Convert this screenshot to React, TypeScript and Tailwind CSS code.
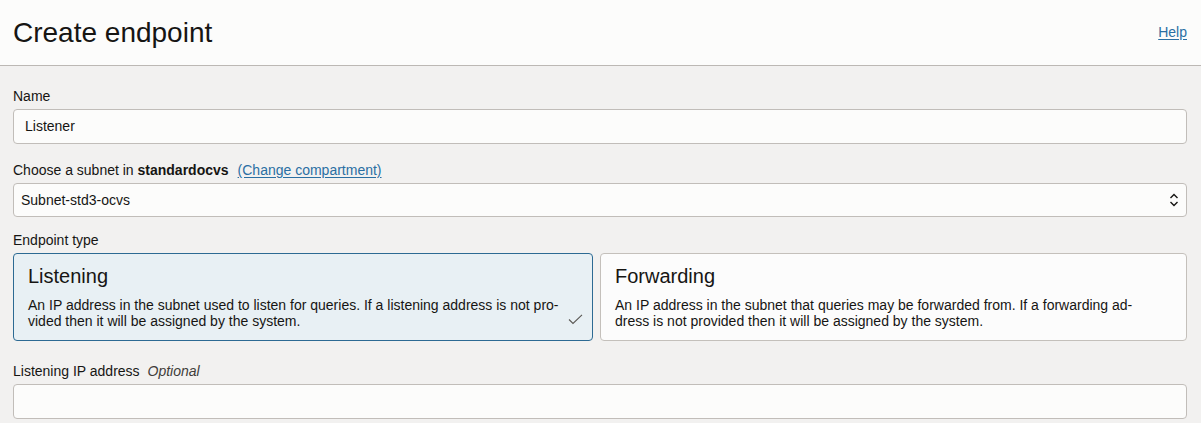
import React from "react";

const font = { fontFamily: "'Liberation Sans', Arial, sans-serif" };

function Label({ children, className = "" }: { children: React.ReactNode; className?: string }) {
  return (
    <div className={`text-[14px] leading-[17px] text-[#161513] ${className}`}>
      {children}
    </div>
  );
}

function TypeCard({
  title,
  lines,
  selected,
  className = "",
}: {
  title: string;
  lines: string[];
  selected?: boolean;
  className?: string;
}) {
  return (
    <div
      className={`relative rounded-[4px] border px-[14px] pt-[10px] pb-[11px] ${
        selected ? "border-[#2d6a93] bg-[#e8f0f4]" : "border-[#c4c0bb] bg-[#fcfcfc]"
      } ${className}`}
    >
      <div className="text-[20px] leading-[24px] text-[#161513]">{title}</div>
      <div className="mt-[9px] text-[14px] leading-[16px] text-[#161513]">
        {lines.map((l) => (
          <div key={l} className="whitespace-nowrap">
            {l}
          </div>
        ))}
      </div>
      {selected && (
        <svg
          className="absolute right-[9px] bottom-[15px]"
          width="15"
          height="11"
          viewBox="0 0 15 11"
          fill="none"
        >
          <path d="M1 5.5 L5 9.5 L14 0.8" stroke="#5a5854" strokeWidth="1.1" />
        </svg>
      )}
    </div>
  );
}

export default function App() {
  return (
    <div className="w-[1201px] h-[423px] overflow-hidden bg-[#f2f1f0]" style={font}>
      {/* Header */}
      <div className="flex h-[66px] items-center justify-between border-b border-[#bcb8b4] bg-[#fcfcfb] pl-[13px] pr-[14px]">
        <h1 className="text-[28px] leading-[32px] text-[#161513]">Create endpoint</h1>
        <a href="#" className="text-[14px] leading-[17px] text-[#2a6fa3] underline underline-offset-2">
          Help
        </a>
      </div>

      <div className="pl-[13px] pr-[14px] pt-[22px]">
        <Label className="mb-[4px]">Name</Label>
        <div className="flex h-[35px] items-center rounded-[4px] border border-[#c1bdb9] bg-[#fcfcfb] px-[11px] text-[14px] text-[#161513]">
          Listener
        </div>

        <Label className="mt-[18px] mb-[4px]">
          Choose a subnet in <span className="font-bold">standardocvs</span>
          <a href="#" className="ml-[9px] text-[#2a6fa3] underline underline-offset-2">
            (Change compartment)
          </a>
        </Label>
        <div className="flex h-[34px] items-center justify-between rounded-[4px] border border-[#c1bdb9] bg-[#fcfcfb] pl-[7px] pr-[7px] text-[14px] text-[#161513]">
          <span>Subnet-std3-ocvs</span>
          <svg width="10" height="14" viewBox="0 0 10 14" fill="none">
            <path d="M1.5 5 L5 1.5 L8.5 5" stroke="#161513" strokeWidth="1.4" />
            <path d="M1.5 9 L5 12.5 L8.5 9" stroke="#161513" strokeWidth="1.4" />
          </svg>
        </div>

        <Label className="mt-[15px] mb-[4px]">Endpoint type</Label>
        <div className="flex gap-[7px]">
          <TypeCard
            selected
            className="w-[580px] shrink-0"
            title="Listening"
            lines={[
              "An IP address in the subnet used to listen for queries. If a listening address is not pro-",
              "vided then it will be assigned by the system.",
            ]}
          />
          <TypeCard
            className="flex-1"
            title="Forwarding"
            lines={[
              "An IP address in the subnet that queries may be forwarded from. If a forwarding ad-",
              "dress is not provided then it will be assigned by the system.",
            ]}
          />
        </div>

        <Label className="mt-[22px] mb-[4px]">
          Listening IP address <span className="ml-[4px] italic text-[#3f3d3a]">Optional</span>
        </Label>
        <div className="h-[35px] rounded-[4px] border border-[#c1bdb9] bg-[#fcfcfb]" />
      </div>
    </div>
  );
}
